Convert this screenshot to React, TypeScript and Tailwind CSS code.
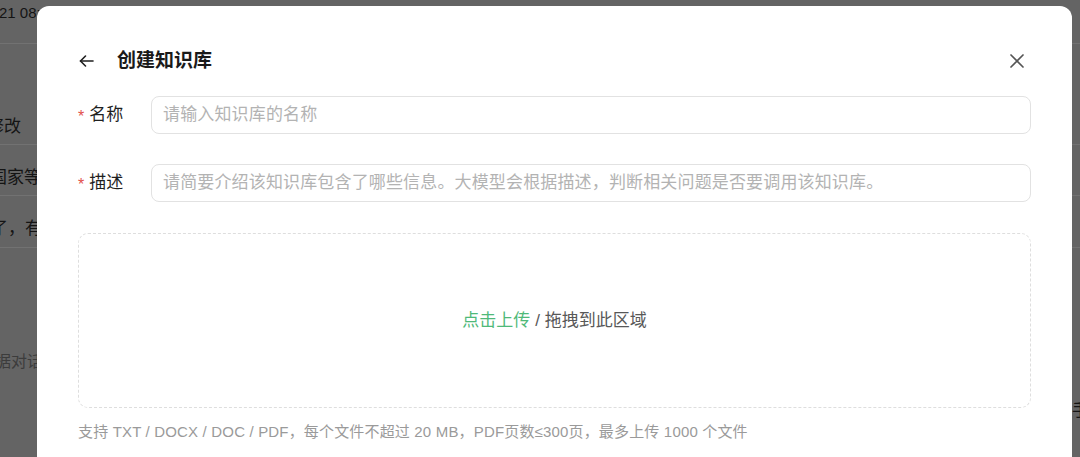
import React from "react";

const cjk = { fontFamily: '"Liberation Sans", "Noto Sans CJK SC", sans-serif' };

function BackdropPage() {
  // the page that sits behind the dialog, dimmed by the overlay
  return (
    <div className="flex h-full w-full flex-col text-[#141414]" style={cjk}>
      <div className="h-[44px] border-b border-[#727272] pt-[2px] text-[15px] whitespace-nowrap overflow-hidden">
        <span className="block -ml-[1px]">21 08:32</span>
      </div>
      <div className="flex h-[101px] items-end border-b border-[#727272] pb-[5px] text-[17px] whitespace-nowrap overflow-hidden">
        <span className="-ml-[13px]">修改</span>
      </div>
      <div className="flex h-[51px] items-center border-b border-[#727272] pt-[16px] text-[17px] whitespace-nowrap overflow-hidden">
        <span className="-ml-[27px]">和国家等</span>
      </div>
      <div className="flex h-[52px] items-center border-b border-[#727272] pt-[14px] text-[17px] whitespace-nowrap overflow-hidden">
        <span className="-ml-[9px]">了，有</span>
      </div>
      <div className="flex h-[128px] items-end pb-[2px] text-[16px] text-[#3c3c3c] whitespace-nowrap overflow-hidden">
        <span className="-ml-[5px]">据对话</span>
      </div>
      <div className="flex h-[70px] items-center text-[17px] whitespace-nowrap overflow-hidden">
        <span className="ml-[1072px]">手</span>
      </div>
    </div>
  );
}

function Field({ label, placeholder }: { label: string; placeholder: string }) {
  return (
    <div className="flex items-center">
      <div className="flex w-[73px] shrink-0 items-center gap-[5px] text-[17px] text-[#1f1f1f]">
        <span className="text-[#e2504c] text-[16px] pt-[3px]">*</span>
        <span>{label}</span>
      </div>
      <div className="flex h-[38px] flex-1 items-center rounded-[8px] border border-[#e2e2e2] bg-white pl-[11px]">
        <span className="text-[17px] tracking-[0.15px] text-[#b3b3b3] whitespace-nowrap">{placeholder}</span>
      </div>
    </div>
  );
}

export default function App() {
  return (
    <div className="relative h-[457px] w-[1080px] overflow-hidden bg-[#646464]">
      <BackdropPage />

      <div
        className="absolute left-[37px] top-[6px] h-[480px] w-[1035px] rounded-[12px] bg-white px-[41px] pt-[43px]"
        style={cjk}
      >
        <div className="flex h-[24px] items-center">
          <svg width="15" height="12" viewBox="0 0 15 12" className="ml-[1px]" fill="none" stroke="#1f1f1f" strokeWidth="1.6" strokeLinecap="round" strokeLinejoin="round">
            <path d="M14 6H1.5" />
            <path d="M6.5 1L1.5 6l5 5" />
          </svg>
          <h2 className="ml-[23px] text-[19px] font-bold text-[#1a1a1a]">创建知识库</h2>
          <svg width="14" height="14" viewBox="0 0 14 14" className="ml-auto mr-[7px]" fill="none" stroke="#555" strokeWidth="1.7" strokeLinecap="round">
            <path d="M1 1l12 12M13 1L1 13" />
          </svg>
        </div>

        <div className="mt-[23px] flex flex-col gap-[30px]">
          <Field label="名称" placeholder="请输入知识库的名称" />
          <Field
            label="描述"
            placeholder="请简要介绍该知识库包含了哪些信息。大模型会根据描述，判断相关问题是否要调用该知识库。"
          />
        </div>

        <div className="mt-[31px] flex h-[175px] items-center justify-center rounded-[10px] border border-dashed border-[#dedede] text-[17px]">
          <span className="text-[#4fb979]">点击上传</span>
          <span className="ml-[5px] text-[#585858]">/ 拖拽到此区域</span>
        </div>

        <p className="mt-[14px] text-[15px] leading-[20px] tracking-[0.17px] text-[#9a9a9a]">
          支持 TXT / DOCX / DOC / PDF，每个文件不超过 20 MB，PDF页数≤300页，最多上传 1000 个文件
        </p>
      </div>
    </div>
  );
}
